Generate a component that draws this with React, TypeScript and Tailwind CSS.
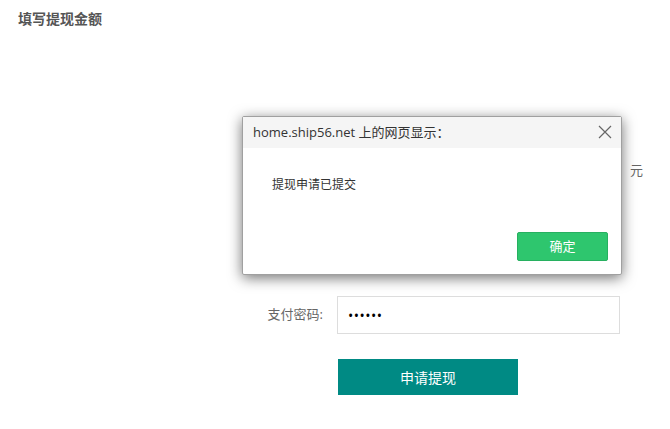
import React from "react";

const cjk = { fontFamily: '"Open Sans", "Noto Sans CJK SC", sans-serif' };

export default function App() {
  return (
    <div className="relative w-[670px] h-[429px] bg-white overflow-hidden" style={cjk}>
      <div className="pl-[18px] pt-[9px] text-[14px] leading-[20px] font-bold text-[#555]">填写提现金额</div>

      <div className="flex flex-col mt-[123px]">
        <div className="flex items-center">
          <div className="w-[323px]" />
          <div className="ml-[14px] w-[283px] h-[38px] border border-[#ddd] bg-white" />
          <div className="ml-[10px] text-[13px] text-[#666]">元</div>
        </div>
        <div className="flex items-center mt-[106px]">
          <div className="w-[323px] text-right text-[13px] text-[#666]">支付密码:</div>
          <div className="ml-[14px] w-[283px] h-[38px] border border-[#ddd] bg-white flex items-center pl-[10px] text-[14px] text-black tracking-[0.5px]">
            ••••••
          </div>
        </div>
        <div className="flex mt-[25px]">
          <div className="ml-[338px] w-[180px] h-[36px] bg-[#008a84] text-white text-[14px] flex items-center justify-center">
            申请提现
          </div>
        </div>
      </div>

      <div className="absolute left-[242px] top-[116px] w-[380px] h-[159px] bg-white border border-[#a0a0a0] rounded-[2px] shadow-[0_3px_14px_rgba(0,0,0,0.55)] flex flex-col">
        <div className="h-[31px] bg-[#f5f5f5] flex items-center justify-between pl-[10px] pr-[9px]">
          <span className="text-[13px] text-[#333]">home.ship56.net 上的网页显示：</span>
          <svg width="14" height="14" viewBox="0 0 14 14" className="mt-[-1px]">
            <path d="M1 1 L13 13 M13 1 L1 13" stroke="#666" strokeWidth="1.2" fill="none" />
          </svg>
        </div>
        <div className="pl-[29px] pt-[28px] text-[12px] leading-[18px] text-[#333]">提现申请已提交</div>
        <div className="flex-1" />
        <div className="flex justify-end pr-[13px] pb-[13px]">
          <div className="w-[91px] h-[29px] bg-[#2ec66e] border border-[#27b060] rounded-[2px] text-white text-[13px] flex items-center justify-center">
            确定
          </div>
        </div>
      </div>
    </div>
  );
}
